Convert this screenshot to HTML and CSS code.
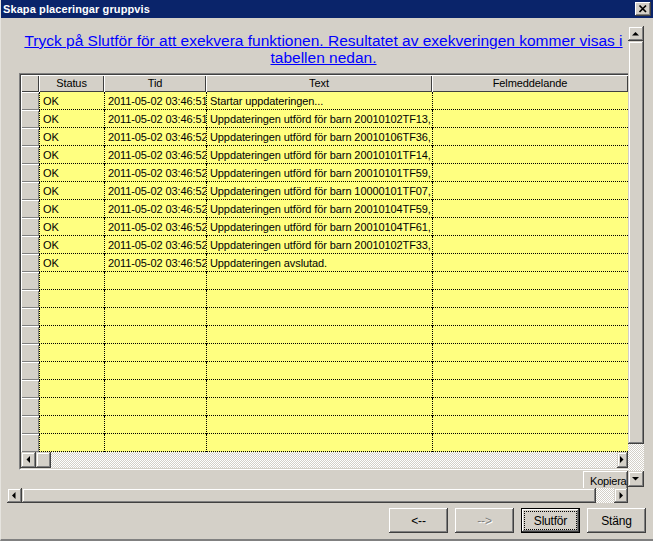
FILE: index.html
```html
<!DOCTYPE html>
<html>
<head>
<meta charset="utf-8">
<link rel="stylesheet" href="styles.css">
</head>
<body>
<div class="window">
  <div class="titlebar">
    <span class="title">Skapa placeringar gruppvis</span>
    <span class="btn3d close"><svg width="16" height="14" viewBox="0 0 16 14"><path d="M4.5 3.5 L11 10 M11 3.5 L4.5 10" stroke="#000" stroke-width="1.7" fill="none"/></svg></span>
  </div>
  <div class="client">
    <div class="top">
      <div class="content">
        <div class="msg"><a href="#">Tryck på Slutför för att exekvera funktionen. Resultatet av exekveringen kommer visas i<br>tabellen nedan.</a></div>
        <div class="grid">
          <div class="grid-inner">
            <div class="gtable">
              <div class="rh corner"></div><div class="hc">Status</div><div class="hc">Tid</div><div class="hc">Text</div><div class="hc">Felmeddelande</div>

              <div class="rh"></div><div class="dc">OK</div><div class="dc">2011-05-02 03:46:51</div><div class="dc">Startar uppdateringen...</div><div class="dc"></div>
              <div class="rh"></div><div class="dc">OK</div><div class="dc">2011-05-02 03:46:51</div><div class="dc">Uppdateringen utförd för barn 20010102TF13,</div><div class="dc"></div>
              <div class="rh"></div><div class="dc">OK</div><div class="dc">2011-05-02 03:46:52</div><div class="dc">Uppdateringen utförd för barn 20010106TF36,</div><div class="dc"></div>
              <div class="rh"></div><div class="dc">OK</div><div class="dc">2011-05-02 03:46:52</div><div class="dc">Uppdateringen utförd för barn 20010101TF14,</div><div class="dc"></div>
              <div class="rh"></div><div class="dc">OK</div><div class="dc">2011-05-02 03:46:52</div><div class="dc">Uppdateringen utförd för barn 20010101TF59,</div><div class="dc"></div>
              <div class="rh"></div><div class="dc">OK</div><div class="dc">2011-05-02 03:46:52</div><div class="dc">Uppdateringen utförd för barn 10000101TF07,</div><div class="dc"></div>
              <div class="rh"></div><div class="dc">OK</div><div class="dc">2011-05-02 03:46:52</div><div class="dc">Uppdateringen utförd för barn 20010104TF59,</div><div class="dc"></div>
              <div class="rh"></div><div class="dc">OK</div><div class="dc">2011-05-02 03:46:52</div><div class="dc">Uppdateringen utförd för barn 20010104TF61,</div><div class="dc"></div>
              <div class="rh"></div><div class="dc">OK</div><div class="dc">2011-05-02 03:46:52</div><div class="dc">Uppdateringen utförd för barn 20010102TF33,</div><div class="dc"></div>
              <div class="rh"></div><div class="dc">OK</div><div class="dc">2011-05-02 03:46:52</div><div class="dc">Uppdateringen avslutad.</div><div class="dc"></div>

              <div class="rh"></div><div class="dc"></div><div class="dc"></div><div class="dc"></div><div class="dc"></div>
              <div class="rh"></div><div class="dc"></div><div class="dc"></div><div class="dc"></div><div class="dc"></div>
              <div class="rh"></div><div class="dc"></div><div class="dc"></div><div class="dc"></div><div class="dc"></div>
              <div class="rh"></div><div class="dc"></div><div class="dc"></div><div class="dc"></div><div class="dc"></div>
              <div class="rh"></div><div class="dc"></div><div class="dc"></div><div class="dc"></div><div class="dc"></div>
              <div class="rh"></div><div class="dc"></div><div class="dc"></div><div class="dc"></div><div class="dc"></div>
              <div class="rh"></div><div class="dc"></div><div class="dc"></div><div class="dc"></div><div class="dc"></div>
              <div class="rh"></div><div class="dc"></div><div class="dc"></div><div class="dc"></div><div class="dc"></div>
              <div class="rh"></div><div class="dc"></div><div class="dc"></div><div class="dc"></div><div class="dc"></div>
              <div class="rh"></div><div class="dc"></div><div class="dc"></div><div class="dc"></div><div class="dc"></div>
            </div>
            <div class="ghscroll">
              <div class="sbtn w15"><svg width="15" height="16" viewBox="0 0 15 16"><polygon points="9,4 9,11 5.5,7.5" fill="#000"/></svg></div>
              <div class="sbtn thumb-small"></div>
              <div class="dither grow"></div>
              <div class="sbtn w11"><svg width="11" height="16" viewBox="0 0 11 16"><polygon points="3,4 3,11 6.5,7.5" fill="#000"/></svg></div>
            </div>
          </div>
        </div>
        <div class="kop-row"><div class="btn3d kopiera">Kopiera</div></div>
      </div>
      <div class="vscroll">
        <div class="sbtn up"><svg width="16" height="15" viewBox="0 0 16 15"><polygon points="4,9.5 11,9.5 7.5,6" fill="#000"/></svg></div>
        <div class="sbtn vthumb"></div>
        <div class="dither vtrack"></div>
        <div class="sbtn down"><svg width="16" height="16" viewBox="0 0 16 16"><polygon points="4,6 11,6 7.5,9.5" fill="#000"/></svg></div>
      </div>
    </div>
    <div class="hscroll">
      <div class="sbtn hleft"><svg width="15" height="15" viewBox="0 0 15 15"><polygon points="8.5,4 8.5,11 5,7.5" fill="#000"/></svg></div>
      <div class="sbtn hthumb"></div>
      <div class="dither htrack"></div>
      <div class="sbtn hright"><svg width="14" height="15" viewBox="0 0 14 15"><polygon points="5.5,4 5.5,11 9,7.5" fill="#000"/></svg></div>
    </div>
    <div class="buttons">
      <div class="btn3d pbtn">&lt;--</div>
      <div class="btn3d pbtn disabled">--&gt;</div>
      <div class="pbtn default"><div class="btn3d inner"><span class="focus">Slutför</span></div></div>
      <div class="btn3d pbtn">Stäng</div>
    </div>
  </div>
</div>
</body>
</html>
```

FILE: styles.css
```css
* { box-sizing: border-box; }
html, body { margin: 0; padding: 0; }
body {
  width: 653px;
  height: 541px;
  overflow: hidden;
  background: #d4d0c8;
  font-family: "Liberation Sans", Arial, sans-serif;
  font-size: 11px;
  color: #000;
}
.window {
  width: 653px;
  height: 541px;
  background: #d4d0c8;
  border-left: 1px solid #e6e4df;
  border-bottom: 2px solid #808080;
  display: flex;
  flex-direction: column;
  overflow: hidden;
}
.titlebar {
  height: 18px;
  background: #0a246a;
  display: flex;
  align-items: center;
  justify-content: space-between;
  padding: 0 2px 0 2px;
  flex: none;
}
.title {
  color: #fff;
  font-weight: bold;
  font-size: 11px;
  letter-spacing: 0.1px;
}
.btn3d {
  background: #d4d0c8;
  box-shadow: inset -1px -1px #404040, inset 1px 1px #fff, inset -2px -2px #808080, inset 2px 2px #d4d0c8;
}
.close {
  width: 16px;
  height: 14px;
  display: block;
}
.close svg { display: block; }
.client {
  flex: 1;
  display: flex;
  flex-direction: column;
  padding-left: 6px;
}
.top {
  display: flex;
  height: 470px;
}
.content {
  width: 621px;
  display: flex;
  flex-direction: column;
}
.msg {
  height: 56px;
  margin-left: 12px;
  width: 609px;
  padding-top: 14px;
  text-align: center;
  font-size: 15.5px;
  line-height: 17px;
  white-space: nowrap;
}
.msg a { color: #0000ff; text-decoration: underline; }

.grid {
  margin-left: 12px;
  width: 609px;
  border-top: 1px solid #808080;
  border-left: 1px solid #808080;
  border-bottom: 1px solid #fff;
}
.grid-inner {
  border-top: 1px solid #404040;
  border-left: 1px solid #404040;
  border-bottom: 1px solid #d4d0c8;
  overflow: hidden;
}
.gtable {
  display: grid;
  grid-template-columns: 18px 65px 102px 226px 196px;
  grid-template-rows: 17px repeat(20, 18px);
}
.rh {
  background: #d4d0c8;
  box-shadow: inset 1px 1px #fff, inset -1px -1px #808080;
}
.corner { box-shadow: inset 1px 1px #fff, inset -1px -1px #404040; }
.hc {
  background: #d4d0c8;
  box-shadow: inset 1px 1px #fff, inset -1px -1px #404040;
  text-align: center;
  line-height: 17px;
  letter-spacing: -0.1px;
  white-space: nowrap;
  overflow: hidden;
}
.dc {
  background: #ffff80;
  border-left: 1px dotted #000;
  border-bottom: 1px dotted #000;
  padding: 1px 0 0 3px;
  line-height: 17px;
  white-space: nowrap;
  overflow: hidden;
  letter-spacing: -0.1px;
}
.ghscroll {
  display: flex;
  height: 16px;
}
.sbtn {
  background: #d4d0c8;
  box-shadow: inset -1px -1px #404040, inset 1px 1px #d4d0c8, inset -2px -2px #808080, inset 2px 2px #fff;
  flex: none;
}
.sbtn svg { display: block; }
.w15 { width: 15px; }
.thumb-small { width: 15px; }
.w11 { width: 11px; }
.grow { flex: 1; }
.dither {
  background: repeating-conic-gradient(#fff 0 25%, #d4d0c8 0 50%) 0 0 / 2px 2px;
}
.kop-row {
  display: flex;
  justify-content: flex-end;
  margin-top: 1px;
  height: 17px;
  overflow: hidden;
}
.kopiera {
  width: 45px;
  height: 20px;
  padding: 3px 0 0 7px;
  font-size: 11px;
  line-height: 14px;
  letter-spacing: -0.2px;
  white-space: nowrap;
  overflow: hidden;
}
.vscroll {
  width: 16px;
  margin-top: 8px;
  display: flex;
  flex-direction: column;
}
.up { height: 15px; }
.vthumb { height: 403px; }
.vtrack { height: 27px; }
.down { height: 16px; }

.hscroll {
  display: flex;
  width: 621px;
  height: 15px;
}
.hleft { width: 15px; }
.hthumb { flex: 1; }
.htrack { width: 18px; }
.hright { width: 14px; }

.buttons {
  display: flex;
  justify-content: flex-end;
  gap: 7px;
  padding-right: 7px;
  margin-top: 5px;
}
.pbtn {
  width: 59px;
  height: 25px;
  display: flex;
  align-items: center;
  justify-content: center;
  font-size: 12px;
  letter-spacing: -0.2px;
}
.disabled {
  color: #808080;
  text-shadow: 1px 1px #fff;
}
.default {
  border: 1px solid #000;
}
.default .inner {
  width: 100%;
  height: 100%;
  display: flex;
  align-items: center;
  justify-content: center;
  padding: 3px;
}
.focus {
  display: flex;
  align-items: center;
  justify-content: center;
  width: 100%;
  height: 100%;
  outline: 1px dotted #000;
}
```
